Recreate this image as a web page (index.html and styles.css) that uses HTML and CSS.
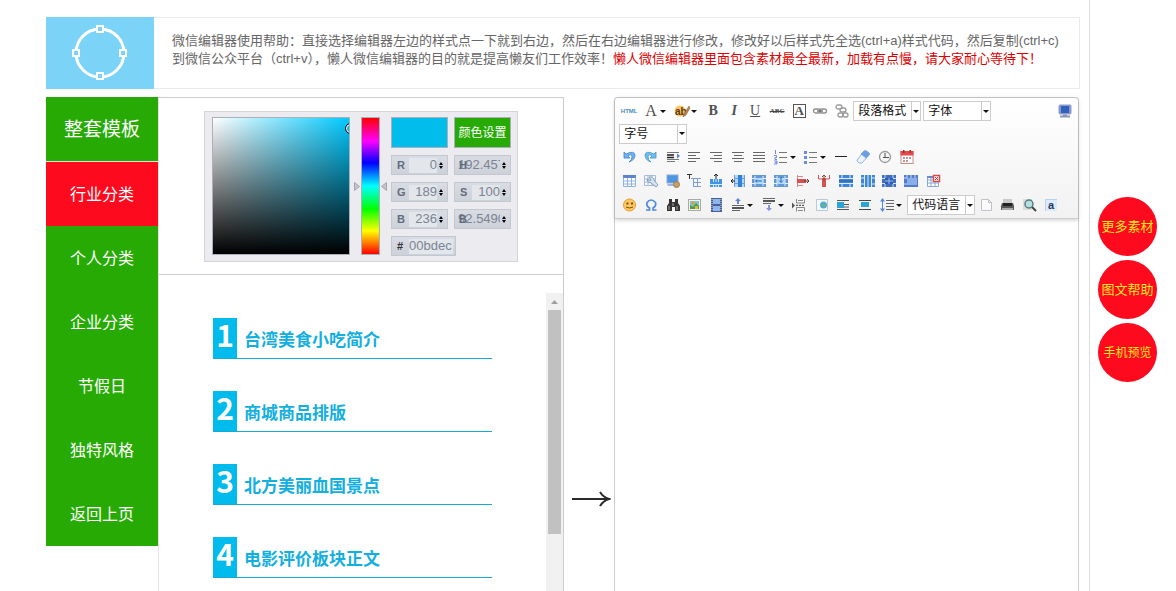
FILE: index.html
```html
<!DOCTYPE html>
<html lang="zh-CN">
<head>
<meta charset="utf-8">
<title>微信编辑器</title>
<link rel="stylesheet" href="styles.css">
</head>
<body>
<div class="page">
  <main class="main">
    <header class="help">
      <div class="help-logo">
        <svg width="58" height="58" viewBox="0 0 58 58" fill="none" stroke="#fff">
          <circle cx="29" cy="29" r="24" stroke-width="3"/>
          <g fill="#7bd3f7" stroke-width="2"><rect x="26" y="2" width="6" height="6"/><rect x="26" y="49" width="6" height="6"/><rect x="2" y="26" width="6" height="6"/><rect x="49" y="26" width="6" height="6"/></g>
        </svg>
      </div>
      <p class="help-text">微信编辑器使用帮助：直接选择编辑器左边的样式点一下就到右边，然后在右边编辑器进行修改，修改好以后样式先全选(ctrl+a)样式代码，然后复制(ctrl+c)到微信公众平台（ctrl+v），懒人微信编辑器的目的就是提高懒友们工作效率！<strong>懒人微信编辑器里面包含素材最全最新，加载有点慢，请大家耐心等待下！</strong></p>
    </header>

    <div class="workspace">
      <nav class="menu">
        <a class="menu-item menu-item--head" href="#">整套模板</a>
        <a class="menu-item menu-item--active" href="#">行业分类</a>
        <a class="menu-item" href="#">个人分类</a>
        <a class="menu-item" href="#">企业分类</a>
        <a class="menu-item" href="#">节假日</a>
        <a class="menu-item" href="#">独特风格</a>
        <a class="menu-item" href="#">返回上页</a>
      </nav>

      <section class="library">
        <div class="picker-area">
          <div class="picker">
            <div class="shade"><span class="shade-cursor"></span></div>
            <div class="hue">
              <svg width="6" height="9" viewBox="0 0 6 9"><path d="M.5.5v8l5-4z" fill="#c4c4ca" stroke="#a5a5ad"/></svg>
              <div class="hue-bar"></div>
              <svg width="6" height="9" viewBox="0 0 6 9"><path d="M5.500.500v8l-5-4z" fill="#c4c4ca" stroke="#a5a5ad"/></svg>
            </div>
            <div class="fields">
              <div class="swatch"></div>
              <button class="apply" type="button">颜色设置</button>
              <label class="field"><span>R</span><input value="0"><svg class="spin" viewBox="0 0 4 7"><path d="M0 3l2-3 2 3zM0 4h4L2 7z"/></svg></label>
              <label class="field field--over"><span>H</span><input value="192.457"><svg class="spin" viewBox="0 0 4 7"><path d="M0 3l2-3 2 3zM0 4h4L2 7z"/></svg></label>
              <label class="field"><span>G</span><input value="189"><svg class="spin" viewBox="0 0 4 7"><path d="M0 3l2-3 2 3zM0 4h4L2 7z"/></svg></label>
              <label class="field"><span>S</span><input value="100"><svg class="spin" viewBox="0 0 4 7"><path d="M0 3l2-3 2 3zM0 4h4L2 7z"/></svg></label>
              <label class="field"><span>B</span><input value="236"><svg class="spin" viewBox="0 0 4 7"><path d="M0 3l2-3 2 3zM0 4h4L2 7z"/></svg></label>
              <label class="field field--over"><span>B</span><input value="92.5490"><svg class="spin" viewBox="0 0 4 7"><path d="M0 3l2-3 2 3zM0 4h4L2 7z"/></svg></label>
              <label class="field field--hex"><span>#</span><input value="00bdec"></label>
            </div>
          </div>
        </div>
        <div class="templates">
          <ol class="template-list">
            <li class="template"><b class="template-no">1</b><span class="template-name">台湾美食小吃简介</span></li>
            <li class="template"><b class="template-no">2</b><span class="template-name">商城商品排版</span></li>
            <li class="template"><b class="template-no">3</b><span class="template-name">北方美丽血国景点</span></li>
            <li class="template"><b class="template-no">4</b><span class="template-name">电影评价板块正文</span></li>
          </ol>
          <div class="scrollbar">
            <svg class="scroll-up" width="17" height="17" viewBox="0 0 17 17"><path d="M5 11l3.500-4L12 11z" fill="#a0a0a0"/></svg>
            <div class="scroll-thumb"></div>
          </div>
        </div>
      </section>

      <div class="transfer">
        <svg width="40" height="18" viewBox="0 0 40 18" fill="none" stroke="#2b2b2b"><path d="M1 9h36" stroke-width="2"/><path d="M29 2q3 5 9 7q-6 2-9 7" stroke-width="2"/></svg>
      </div>

      <section class="editor">
        <div class="toolbar">
          <div class="row row--first">
            <div class="group">
              <button class="tool" type="button" aria-label="源代码"><span class="glyph-html">HTML</span></button>
              <button class="tool tool--split" type="button" aria-label="字体颜色"><span class="glyph glyph--a">A</span><i class="caret"></i></button>
              <button class="tool tool--split" type="button" aria-label="背景色"><svg viewBox="0 0 16 16"><circle cx="6" cy="8" r="5.500" fill="#f8c568"/><text x="1" y="12" font-size="10" class="svg-bold" fill="#5a3710">ab</text><path d="M15 3l-5 8-1 3 3-2 4-7z" fill="#b58450" stroke="#8a5a2b" stroke-width=".5"/></svg><i class="caret"></i></button>
              <button class="tool" type="button" aria-label="加粗"><span class="glyph glyph--b">B</span></button>
            </div>
            <div class="group">
              <button class="tool" type="button" aria-label="斜体"><span class="glyph glyph--i">I</span></button>
            </div>
            <div class="group">
              <button class="tool" type="button" aria-label="下划线"><span class="glyph glyph--u">U</span></button>
              <button class="tool" type="button" aria-label="删除线"><span class="glyph-strike">ABC</span></button>
              <button class="tool" type="button" aria-label="字符边框"><span class="glyph glyph--box">A</span></button>
            </div>
            <div class="group">
              <button class="tool" type="button" aria-label="超链接"><svg viewBox="0 0 16 16" fill="none" stroke="#8f8f8f" stroke-width="1.300"><rect x="1.500" y="6" width="7" height="4" rx="2"/><rect x="7.500" y="6" width="7" height="4" rx="2"/><path d="M5 8h6" stroke="#666"/></svg></button>
              <button class="tool" type="button" aria-label="取消链接"><svg viewBox="0 0 16 16" fill="none" stroke="#9a9a9a" stroke-width="1.300"><rect x="2" y="2" width="6" height="4" rx="2"/><rect x="6" y="5" width="6" height="4" rx="2"/><rect x="4" y="10" width="5" height="4" rx="2"/><rect x="9" y="10" width="5" height="4" rx="2"/></svg></button>
            </div>
            <div class="combo"><select aria-label="段落格式"><option>段落格式</option></select><i class="caret"></i></div>
            <div class="combo combo--next"><select aria-label="字体"><option>字体</option></select><i class="caret"></i></div>
            <button class="tool tool--end" type="button" aria-label="全屏"><svg viewBox="0 0 16 16"><rect x="2" y="2" width="12" height="9" rx="1" fill="#8795c9" stroke="#8d9bcb"/><rect x="4" y="3" width="8" height="7" fill="#2f62bd"/><path d="M6 11.500h4v1h3v2H3v-2h3z" fill="#8a96b8"/></svg></button>
          </div>

          <div class="row row--second">
            <div class="combo"><select aria-label="字号"><option>字号</option></select><i class="caret"></i></div>
          </div>

          <div class="row">
            <div class="group">
              <button class="tool" type="button" aria-label="撤销"><svg viewBox="0 0 16 16"><path d="M3 3v6h6L7 7q4-3 4 1 0 3-3 5 6-2 6-7-1-5-9-1z" fill="#6fb5ef" stroke="#3d82cb" stroke-width=".8"/></svg></button>
              <button class="tool" type="button" aria-label="重做"><svg viewBox="0 0 16 16"><path d="M13 3v6H7l2-2Q5 4 5 8q0 3 3 5-6-2-6-7 1-5 9-1z" fill="#6fc0ef" stroke="#3d92cb" stroke-width=".8"/></svg></button>
              <button class="tool" type="button" aria-label="首行缩进"><svg viewBox="0 0 16 16"><path d="M2 3.500h12M2 10.500h12M2 12.500h8" stroke="#777"/><path d="M2 6h7M2 8.500h7" stroke="#222" stroke-width="1.500"/><path d="M12 4.500l3 2.500-3 2.500z" fill="#5b7fe0"/></svg></button>
            </div>
            <div class="group">
              <button class="tool" type="button" aria-label="左对齐"><svg viewBox="0 0 16 16" stroke="#666"><path d="M2 3.500h12M2 6.500h8M2 9.500h12M2 12.500h8"/></svg></button>
              <button class="tool" type="button" aria-label="右对齐"><svg viewBox="0 0 16 16" stroke="#666"><path d="M2 3.500h12M6 6.500h8M2 9.500h12M6 12.500h8"/></svg></button>
              <button class="tool" type="button" aria-label="居中对齐"><svg viewBox="0 0 16 16" stroke="#666"><path d="M2 3.500h12M4 6.500h8M2 9.500h12M4 12.500h8"/></svg></button>
            </div>
            <div class="group">
              <button class="tool" type="button" aria-label="两端对齐"><svg viewBox="0 0 16 16" stroke="#666"><path d="M2 3.500h12M2 6.500h12M2 9.500h12M2 12.500h12"/></svg></button>
              <button class="tool tool--split" type="button" aria-label="有序列表"><svg viewBox="0 0 16 16"><path d="M6 3.500h8M6 8.500h8M6 13.500h8" stroke="#777"/><path d="M2.500 1v4M1 6.500h2.500v2H2v2h2M1 12h3v3H1M4 13.500H2" stroke="#6d8be6" fill="none"/></svg><i class="caret"></i></button>
            </div>
            <div class="group">
              <button class="tool tool--split" type="button" aria-label="无序列表"><svg viewBox="0 0 16 16"><path d="M6 3.500h8M6 8.500h8M6 13.500h8" stroke="#777"/><path d="M1 2h3v3H1zM1 7h3v3H1zM1 12h3v3H1z" fill="#6d8be6"/></svg><i class="caret"></i></button>
            </div>
            <div class="group">
              <button class="tool" type="button" aria-label="分隔线"><svg viewBox="0 0 16 16"><path d="M2 7.500h12" stroke="#222"/></svg></button>
              <button class="tool" type="button" aria-label="清除格式"><svg viewBox="0 0 16 16" stroke="#7b9fd8" stroke-width=".8"><path d="M9 2q2-1 5 2 1 1 0 2l-7 8q-3 1-5-2 0-1 1-2z" fill="#eef4ff"/><path d="M9 2q2-1 5 2 1 1 0 2l-3 3-5-4z" fill="#6ba0e8"/></svg></button>
              <button class="tool" type="button" aria-label="时间"><svg viewBox="0 0 16 16"><circle cx="8" cy="8" r="5.500" fill="#f4f4f4" stroke="#999" stroke-width="1.300"/><path d="M8 4v4.500h4M8 8.500H6" stroke="#555" fill="none"/></svg></button>
              <button class="tool" type="button" aria-label="日期"><svg viewBox="0 0 16 16"><rect x="2" y="2.500" width="12" height="12" fill="#fff" stroke="#cc8c8c"/><path d="M1.500 2h13v4.500h-13z" fill="#e34b4b"/><path d="M4 1h1.500v3H4zM10.500 1H12v3h-1.500z" fill="#a92929"/><path d="M4 8h2v2H4zM7 8h2v2H7zM10 8h2v2h-2zM4 11h2v2H4zM7 11h2v2H7z" fill="#b99"/></svg></button>
            </div>
          </div>

          <div class="row">
            <div class="group">
              <button class="tool" type="button" aria-label="插入表格"><svg viewBox="0 0 16 16"><path d="M2.500 2.500h12v11h-12zM2.500 8h12M2.500 11h12M6.500 5v8M10.500 5v8" fill="#fff" stroke="#8fb2df"/><path d="M2 2h13v3H2z" fill="#5f83cf"/></svg></button>
              <button class="tool" type="button" aria-label="表格属性"><svg viewBox="0 0 16 16"><path d="M1.500 2.500h11v10h-11zM1.500 6h11M1.500 9h11M5 3v9M9 3v9" fill="#f5f9ff" stroke="#a6bcd8"/><path d="M6 4q4-1 5 3l4 5-2 2-5-4q-4 0-4-4l3 2 1-1z" fill="#d5e3ef" stroke="#7191b0" stroke-width=".8"/></svg></button>
              <button class="tool" type="button" aria-label="插入图片"><svg viewBox="0 0 16 16"><rect x="2" y="2" width="11" height="8" fill="#4e96e4" stroke="#8aabd4"/><path d="M2 11h10v2H3z" fill="#9ab6dc"/><circle cx="11.500" cy="11.500" r="3" fill="#c6a067" stroke="#9f7b48"/></svg></button>
            </div>
            <div class="group">
              <button class="tool" type="button" aria-label="表前插入行"><svg viewBox="0 0 16 16"><path d="M1 1.500h5M3.500 2v4" stroke="#333"/><path d="M5 5.500h10M7 9.500h8M7 13.500h8M7.500 5v9M11.500 5v9" stroke="#7a9ed7" fill="none"/></svg></button>
              <button class="tool" type="button" aria-label="插入行"><svg viewBox="0 0 16 16"><path d="M2 6h12v8H2z" fill="#4395e2"/><path d="M2 11.500h12M5.500 6v3M8 6v3M10.500 6v3M5.500 12v2M8 12v2M10.500 12v2" stroke="#d6eafc"/><path d="M8 6V1M6 3l2-2 2 2" stroke="#222" fill="none"/></svg></button>
              <button class="tool" type="button" aria-label="插入列"><svg viewBox="0 0 16 16"><path d="M4 2h11v12H4z" fill="#b7d5f3"/><path d="M8 2h4v12H8z" fill="#2e83d8"/><path d="M4.500 2v12M14.500 2v12M4 5.500h4M4 10.500h4M12 5.500h3M12 10.500h3" stroke="#6f9ddb"/><path d="M5 8H1M3 6L1 8l2 2" stroke="#222" fill="none"/></svg></button>
            </div>
            <div class="group">
              <button class="tool" type="button" aria-label="合并单元格"><svg viewBox="0 0 16 16"><path d="M1 2h14v12H1z" fill="#6498d6"/><path d="M4 3v10M12 3v10M1 5.500h3M1 10.500h3M12 5.500h3M12 10.500h3" stroke="#e4effb"/><path d="M4 5h8v6H4z" fill="#b4dcfa"/><path d="M5 8h6M6 6.500L4.500 8 6 9.500" stroke="#1e65bb" fill="none"/></svg></button>
              <button class="tool" type="button" aria-label="向下合并"><svg viewBox="0 0 16 16"><path d="M1 2h14v12H1z" fill="#6498d6"/><path d="M4 3v10M12 3v10M1 5.500h3M1 10.500h3M12 5.500h3M12 10.500h3" stroke="#e4effb"/><path d="M4 5h8v6H4z" fill="#b4dcfa"/><path d="M8 4v5M6 7.500l2 2 2-2" stroke="#1e65bb" fill="none"/></svg></button>
              <button class="tool" type="button" aria-label="删除行"><svg viewBox="0 0 16 16"><path d="M2.500 2v12M2 3.500h6M2 12.500h6" stroke="#d88" fill="none"/><path d="M2 6h9v4H2z" fill="#d65252"/><path d="M9 8h5M12 6l2 2-2 2" stroke="#6d2c2c" fill="none"/></svg></button>
            </div>
            <div class="group">
              <button class="tool" type="button" aria-label="删除列"><svg viewBox="0 0 16 16"><path d="M2.500 2v4h11V2" stroke="#c55" fill="none"/><path d="M6 5h4v9H6z" fill="#d65252"/><path d="M8 2v6M6 4l2-2 2 2" stroke="#843" fill="none"/></svg></button>
              <button class="tool" type="button" aria-label="拆分行"><svg viewBox="0 0 16 16"><path d="M1 2h14v12H1z" fill="#3f86d3"/><path d="M1 5.500h14M1 10.500h14M4 2v3M12 2v3M4 11v3M12 11v3" stroke="#dcecfb"/><path d="M1 8h14" stroke="#285ea4"/></svg></button>
              <button class="tool" type="button" aria-label="拆分列"><svg viewBox="0 0 16 16"><path d="M1 2h14v12H1z" fill="#3f86d3"/><path d="M4.500 2v12M8 2v12M11.500 2v12M1 5h3M1 11h3M12 5h3M12 11h3" stroke="#dcecfb"/></svg></button>
            </div>
            <div class="group">
              <button class="tool" type="button" aria-label="完全拆分"><svg viewBox="0 0 16 16"><path d="M1 2h14v12H1z" fill="#3f6ebe"/><path d="M4 2v3M12 2v3M4 11v3M12 11v3M1 5.500h14M1 10.500h14" stroke="#cbdcf5"/><path d="M4 5h8v6H4z" fill="#315bb4"/><path d="M8 5v6M4 8h8" stroke="#9bbcec"/></svg></button>
              <button class="tool" type="button" aria-label="合并多个单元格"><svg viewBox="0 0 16 16"><path d="M1 2h14v12H1z" fill="#547bc9"/><path d="M4 2v3M8 2v3M12 2v3M1 5h3M1 11h3" stroke="#cbdcf5"/><path d="M4 5h10v7H4z" fill="#89afe9"/></svg></button>
              <button class="tool" type="button" aria-label="删除表格"><svg viewBox="0 0 16 16"><path d="M2.500 3.500h11v10h-11zM2.500 7h11M2.500 10h11M6 4v9M10 4v9" fill="#fff" stroke="#86a8d9"/><path d="M2 3h7v2H2z" fill="#668bd1"/><path d="M8.500 2.500h6v6h-6z" fill="#fff" stroke="#df4747" stroke-width="1.500"/><path d="M10 4l3 3M13 4l-3 3" stroke="#d43434"/></svg></button>
            </div>
          </div>

          <div class="row">
            <div class="group">
              <button class="tool" type="button" aria-label="表情"><svg viewBox="0 0 16 16"><circle cx="8.500" cy="8" r="6" fill="#ffc95b" stroke="#e99a34"/><path d="M5.500 5.500h2v2h-2zM10 5.500h2v2h-2z" fill="#754a20"/><path d="M5 10q3.500 2 7 0" stroke="#754a20" fill="none"/></svg></button>
              <button class="tool" type="button" aria-label="特殊字符"><svg viewBox="0 0 16 16"><path d="M3 13h3.500v-2Q3 9 4 5.500q4-5 8.500 0 1 3.500-2.500 5.500v2h3.500" fill="none" stroke="#4f88df" stroke-width="1.700"/></svg></button>
              <button class="tool" type="button" aria-label="查找替换"><svg viewBox="0 0 16 16"><path d="M4 2h3v3h3V2h3v4l2 3v5h-5v-4H7v4H2V9l2-3z" fill="#333"/><path d="M4 9v4M12 9v4M8 6v3" stroke="#aaa"/></svg></button>
            </div>
            <div class="group">
              <button class="tool" type="button" aria-label="图片"><svg viewBox="0 0 16 16"><rect x="2.500" y="2.500" width="12" height="11" fill="#f4f1e6" stroke="#a9a9a9"/><path d="M4 4h9v8H4z" fill="#84c1c5"/><path d="M4 12V8l3 2 3-4 3 3v3z" fill="#4d9b45"/><circle cx="7" cy="6" r="1.500" fill="#e0993e"/><path d="M9 9h3v3H9z" fill="#d8ba3f"/></svg></button>
              <button class="tool" type="button" aria-label="视频"><svg viewBox="0 0 16 16"><path d="M3 1h11v14H3z" fill="#4c5e91"/><path d="M5 2h7v5H5zM5 9h7v5H5z" fill="#8fb7ef"/><path d="M4 2v12M13 2v12" stroke="#cfd9ef" stroke-dasharray="1 1"/></svg></button>
              <button class="tool tool--split" type="button" aria-label="段前距"><svg viewBox="0 0 16 16"><path d="M2 8.500h12M2 13.500h8" stroke="#666"/><path d="M2 11h12" stroke="#222" stroke-width="1.500"/><path d="M8 1l3 3H9v3H7V4H5z" fill="#6287d8"/></svg><i class="caret"></i></button>
              <button class="tool tool--split" type="button" aria-label="段后距"><svg viewBox="0 0 16 16"><path d="M2 1.500h12M2 6.500h8" stroke="#666"/><path d="M2 4h12" stroke="#222" stroke-width="1.500"/><path d="M8 14l-3-3h2V8h2v3h2z" fill="#8a94d2"/></svg><i class="caret"></i></button>
            </div>
            <div class="group">
              <button class="tool" type="button" aria-label="分页"><svg viewBox="0 0 16 16"><path d="M5.500 2v4h8V2M5.500 14.500v-4h8v4M7 3.500h5M7 13.500h5" fill="none" stroke="#888"/><path d="M5 8.300h9" stroke="#333" stroke-dasharray="2 1"/><path d="M1 5.500l3 3-3 3z" fill="#555"/></svg></button>
            </div>
            <div class="group group--apart">
              <button class="tool" type="button" aria-label="地图"><svg viewBox="0 0 16 16"><path d="M2.500 2.500h11v11h-11z" fill="#f4f9fc" stroke="#b9c8d5"/><circle cx="9.500" cy="8" r="3.500" fill="#55a9d5"/><path d="M8 6l3 2-2 3z" fill="#6dbb65"/></svg></button>
            </div>
            <div class="group">
              <button class="tool" type="button" aria-label="图片左浮动"><svg viewBox="0 0 16 16"><path d="M2 3.500h12M9 7.500h5M9 10h5M2 12.500h12" stroke="#555"/><rect x="2" y="5" width="7" height="6" fill="#2aa3d8"/></svg></button>
              <button class="tool" type="button" aria-label="图片居中"><svg viewBox="0 0 16 16"><path d="M2 3.500h12M2 12.500h12" stroke="#444"/><rect x="4" y="5" width="8" height="5" fill="#2aa3d8"/></svg></button>
              <button class="tool tool--split" type="button" aria-label="行间距"><svg viewBox="0 0 16 16"><path d="M7 3.500h8M7 6.500h8M7 9.500h8M7 12.500h8" stroke="#666"/><path d="M3.500 3v10" stroke="#5387da"/><path d="M3.500 1L6 4.500H1zM3.500 15L1 11.500h5z" fill="#5387da"/></svg><i class="caret"></i></button>
            </div>
            <div class="combo"><select aria-label="代码语言"><option>代码语言</option></select><i class="caret"></i></div>
            <div class="group">
              <button class="tool" type="button" aria-label="清空"><svg viewBox="0 0 16 16"><path d="M3.500 2.500h7l3 3v8h-10z" fill="#fbfbfd" stroke="#c0c2ca"/><path d="M10.500 2.500v3h3" fill="none" stroke="#c0c2ca"/></svg></button>
            </div>
            <div class="group">
              <button class="tool" type="button" aria-label="打印"><svg viewBox="0 0 16 16"><path d="M4 2h9v4H4z" fill="#c9c9c9"/><path d="M3 6h11l1 3v4H2V9z" fill="#555"/><path d="M4 6h9v3H4z" fill="#222"/><path d="M3 11h11v2H3z" fill="#aaa"/></svg></button>
              <button class="tool" type="button" aria-label="预览"><svg viewBox="0 0 16 16"><path d="M2 2h9v11H2z" fill="#dcdcdc"/><circle cx="8" cy="7" r="4" fill="#b5e0de" stroke="#557e8b" stroke-width="1.500"/><path d="M11 10l4 4" stroke="#444" stroke-width="2"/></svg></button>
              <button class="tool" type="button" aria-label="帮助"><svg viewBox="0 0 16 16"><path d="M2 2h12v12H2z" fill="#dcebfb"/><path d="M2.500 14V2.500H14" stroke="#b9d0ef" fill="none"/><text x="5" y="12" font-size="11" class="svg-bold" fill="#26355f">a</text></svg></button>
            </div>
          </div>
        </div>
        <div class="canvas" contenteditable="true" aria-label="编辑区"></div>
      </section>
    </div>
  </main>

  <aside class="shortcuts">
    <a class="bubble" href="#">更多素材</a>
    <a class="bubble" href="#">图文帮助</a>
    <a class="bubble bubble--small" href="#">手机预览</a>
  </aside>
</div>
</body>
</html>
```
FILE: styles.css
```css
* { box-sizing: border-box; }

body {
  margin: 0;
  background: #fff;
  color: #333;
  font: 13px/18px "Liberation Sans", "Noto Sans CJK SC", sans-serif;
}

a { text-decoration: none; }

button, input, select { font: inherit; color: inherit; }

svg { display: block; }

.page {
  display: flex;
  height: 100vh;
  overflow: hidden;
}

.main {
  flex: 1;
  display: flex;
  flex-direction: column;
  gap: 8px;
  min-width: 0;
  padding: 17px 9px 0 46px;
  border-right: 1px solid #ddd;
}

/* Help banner */
.help {
  display: flex;
  flex: none;
  min-height: 72px;
  border: 1px solid #ebebeb;
  border-left: 0;
}

.help-logo {
  flex: none;
  display: flex;
  align-items: center;
  justify-content: center;
  width: 108px;
  margin: -1px 0;
  background: #7bd3f7;
}

.help-text {
  margin: 0;
  padding: 14px 14px 0 18px;
  color: #666;
}

.help-text strong { color: #d00; font-weight: 400; }

.workspace {
  flex: 1;
  display: flex;
  min-height: 0;
  padding-right: 1px;
}

/* Category menu */
.menu {
  flex: none;
  align-self: flex-start;
  width: 112px;
  background: #27ab04;
}

.menu-item {
  display: flex;
  align-items: center;
  justify-content: center;
  height: 64px;
  padding-top: 2px;
  color: #fff;
  font-size: 16px;
}

.menu-item--head {
  height: 65px;
  border-bottom: 1px solid #ddd;
  font-size: 19px;
}

.menu-item--active { background: #fd0a1f; }

/* Template library */
.library {
  flex: 406;
  display: flex;
  flex-direction: column;
  min-width: 0;
  border: 1px solid #ccc;
  border-width: 1px 1px 0;
  border-left-color: #e4e4e4;
}

.picker-area {
  flex: none;
  display: flex;
  justify-content: center;
  padding: 13px 0 12px;
  border-bottom: 1px solid #ccc;
}

.picker {
  display: flex;
  align-items: flex-start;
  padding: 5px 6px 5px 7px;
  border: 1px solid #d4d4d8;
  background: #ececf0;
}

.shade {
  position: relative;
  width: 138px;
  height: 138px;
  overflow: hidden;
  border: 1px solid #a9b0b9;
  background:
    linear-gradient(to top, #000, transparent),
    linear-gradient(to right, #fff, #00c9ff);
}

.shade-cursor {
  position: absolute;
  top: 5px;
  right: -7px;
  width: 11px;
  height: 11px;
  border: 1px solid #000;
  border-radius: 50%;
  box-shadow: inset 0 0 0 1px #fff;
}

.hue {
  display: flex;
  align-items: center;
  gap: 1px;
  height: 138px;
  margin: 0 4px;
}

.hue-bar {
  width: 19px;
  height: 138px;
  border: 1px solid #a9b0b9;
  background: linear-gradient(#f00, #f0f 17%, #00f 33%, #0ff 50%, #0f0 67%, #ff0 83%, #f00);
}

.fields {
  display: grid;
  grid-template-columns: 57px 57px;
  grid-template-rows: 31px repeat(4, 20px);
  gap: 7px 6px;
}

.swatch {
  border: 1px solid #a9b0b9;
  background: #00bdec;
}

.apply {
  padding: 0;
  border: 1px solid #a9b0b9;
  background: #27ab04;
  color: #fff;
  font-size: 12px;
}

.field {
  position: relative;
  display: flex;
  align-items: center;
  padding: 0 4px 0 5px;
  border: 1px solid #c3c7cf;
  background: linear-gradient(#d9dce3, #cdd1d9);
}

.field span {
  width: 12px;
  color: #626c7d;
  font-size: 11px;
  font-weight: 700;
}

.field input {
  flex: 1;
  width: 0;
  height: 15px;
  padding: 0;
  border: 0;
  background: #e3e6eb;
  color: #7b8492;
  text-align: right;
}

.field--over { padding-left: 3px; }

.field--over span {
  position: absolute;
  left: 4px;
}

.field--over input {
  background: none;
  text-align: left;
}

.field--hex { grid-column: 1 / 3; width: 65px; padding-right: 2px; }
.field--hex span { color: #333; }
.field--hex input { text-align: left; }

.spin {
  flex: none;
  width: 4px;
  height: 7px;
  margin-left: 2px;
}

.templates {
  flex: 1;
  display: flex;
  min-height: 0;
  padding-top: 18px;
}

.template-list {
  flex: 1;
  display: flex;
  flex-direction: column;
  gap: 32px;
  margin: 0;
  padding: 25px 54px 0;
  overflow: hidden;
  list-style: none;
}

.template {
  flex: none;
  display: flex;
  border-bottom: 1px solid #17a9d5;
}

.template-no {
  width: 24px;
  height: 40px;
  background: #00bbec;
  color: #fff;
  font: 700 30px/32px "Noto Sans CJK SC", sans-serif;
  text-align: center;
}

.template-name {
  padding: 11px 0 0 7px;
  color: #12afdf;
  font-size: 17px;
  font-weight: 700;
  line-height: 24px;
}

.scrollbar {
  flex: none;
  width: 17px;
  background: #f1f1f1;
}

.scroll-thumb {
  height: 224px;
  margin: 0 2px;
  background: #c1c1c1;
}

.transfer {
  flex: none;
  display: flex;
  justify-content: center;
  width: 50px;
  padding: 393px 0 0 3px;
}

.transfer svg { flex: none; }

/* Editor */
.editor {
  flex: 465;
  display: flex;
  flex-direction: column;
  min-width: 0;
  border: 1px solid #ccc;
  border-bottom: 0;
  border-radius: 4px 4px 0 0;
}

.toolbar {
  flex: none;
  padding: 2px 3px 1px 4px;
  border-bottom: 1px solid #ccc;
  border-radius: 4px 4px 0 0;
  background: linear-gradient(#fff, #f2f2f2);
  box-shadow: 0 1px 4px rgba(0, 0, 0, .2);
}

.row {
  display: flex;
  align-items: center;
  gap: 1px;
  height: 24px;
}

.row--first { height: 22px; }
.row--second { height: 23px; }

.group { display: flex; gap: 2px; }
.group--apart { margin-left: 2px; }

.tool {
  flex: none;
  display: flex;
  align-items: center;
  justify-content: center;
  width: 20px;
  height: 20px;
  padding: 0;
  border: 0;
  background: none;
}

.tool svg { flex: none; width: 16px; height: 16px; }

.tool--split {
  justify-content: space-between;
  width: 29px;
  padding: 0 4px 0 2px;
}

.tool--end { margin-left: auto; }

.caret {
  flex: none;
  border: 3px solid transparent;
  border-top-color: #111;
  border-bottom: 0;
}

.glyph {
  width: 16px;
  color: #505050;
  font: 700 14px/16px "Liberation Serif", serif;
  text-align: center;
}

.glyph--a { font-size: 16px; font-weight: 400; }
.glyph--i { font-style: italic; }
.glyph--u { font-weight: 400; text-decoration: underline; }

.glyph--box {
  width: 13px;
  border: 1px solid #555;
  font-size: 13px;
  line-height: 12px;
}

.glyph-html {
  color: #4c8aba;
  font-size: 6px;
  font-weight: 700;
}

.glyph-strike {
  color: #444;
  font: 700 7px/12px "Liberation Serif", serif;
  text-decoration: line-through;
}

.svg-bold { font-family: "Liberation Sans", sans-serif; font-weight: 700; }

.combo {
  flex: none;
  display: flex;
  align-items: center;
  width: 68px;
  height: 20px;
  border: 1px solid #ccc;
  background: #fff;
}

.combo--next { margin-left: 1px; }

.combo select {
  flex: 1;
  min-width: 0;
  height: 18px;
  padding: 0 0 0 4px;
  appearance: none;
  border: 0;
  border-right: 1px solid #ccc;
  background: none;
  color: #111;
  font-size: 12px;
}

.combo .caret { margin: 0 1px; }

.canvas { flex: 1; outline: 0; }

/* Floating shortcuts */
.shortcuts {
  flex: none;
  display: flex;
  flex-direction: column;
  gap: 4px;
  width: 86px;
  padding: 197px 0 0 8px;
}

.bubble {
  display: flex;
  align-items: center;
  justify-content: center;
  width: 59px;
  height: 59px;
  border-radius: 50%;
  background: #fd0a1f;
  color: #ffe51e;
}

.bubble--small { font-size: 12px; }
```
